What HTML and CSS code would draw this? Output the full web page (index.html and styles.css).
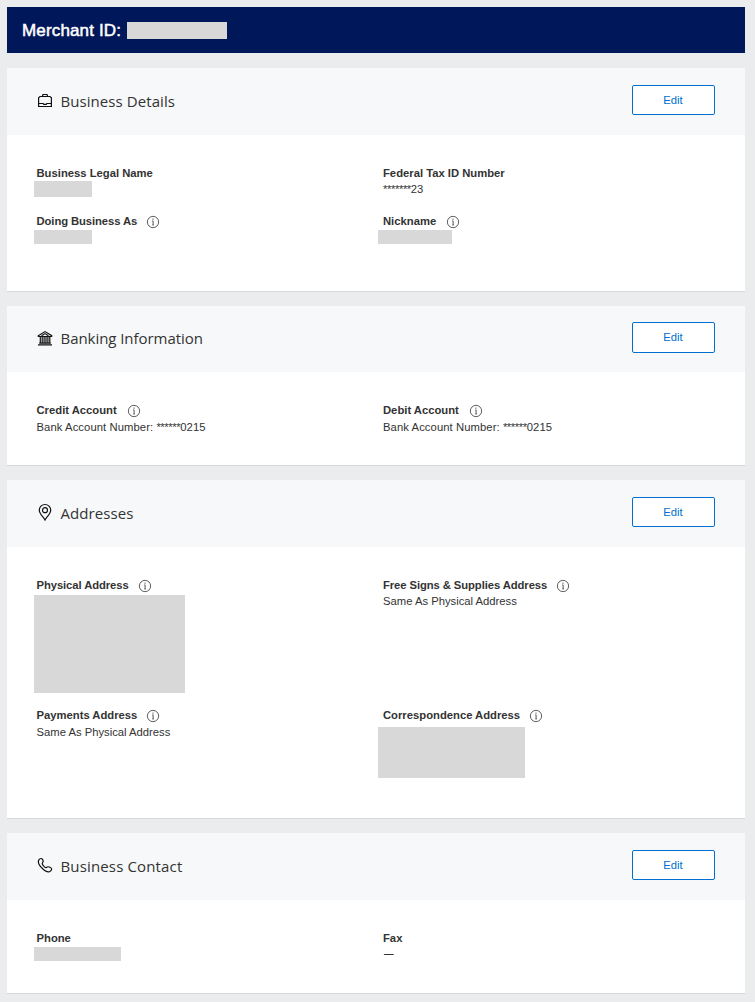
FILE: index.html
```html
<!DOCTYPE html>
<html lang="en">
<head>
<meta charset="utf-8">
<title>Merchant Profile</title>
<link rel="stylesheet" href="styles.css">
</head>
<body>
<svg class="defs" width="0" height="0">
  <symbol id="info" viewBox="0 0 14 14"><circle cx="7" cy="7" r="5.65" fill="none" stroke="#444" stroke-width=".85"/><path d="M6.3 5.9H7.1V10M6.4 10H7.8" fill="none" stroke="#444" stroke-width=".9"/><circle cx="7" cy="4.1" r=".7" fill="#444"/></symbol>
</svg>
<header class="merchant"><h1>Merchant ID:</h1><span class="redacted merchant-id"></span></header>
<main>
  <section class="card details">
    <div class="card-head">
      <svg class="icon" viewBox="0 0 16 18"><path d="M3 5.5h10l1.4 1.2v8.8H1.6V6.7zM1.6 12.5h4.6l.5.9h2.6l.5-.9h4.6M5.4 5.3l.6-1.8h4l.6 1.8"/></svg>
      <h2>Business Details</h2><button>Edit</button>
    </div>
    <div class="fields">
      <div class="field"><div class="label">Business Legal Name</div><div class="redacted name"></div></div>
      <div class="field"><div class="label">Federal Tax ID Number</div><div class="value"><span class="mask">*******</span>23</div></div>
      <div class="field"><div class="label tight">Doing Business As<svg class="info"><use href="#info"/></svg></div><div class="redacted alias"></div></div>
      <div class="field"><div class="label">Nickname<svg class="info wide"><use href="#info"/></svg></div><div class="redacted nickname"></div></div>
    </div>
  </section>
  <section class="card banking">
    <div class="card-head">
      <svg class="icon bank" viewBox="0 0 16 18"><path d="M1.3 6.7 8 2.6l6.7 4.1v.8H1.3zM4.6 6.8 8 4.6l3.4 2.2M3.3 7.5v6.6M5.2 7.5v6.6M7.1 7.5v6.6M9 7.5v6.6M10.9 7.5v6.6M12.8 7.5v6.6M2.2 14.1h11.6M1 15.8h14"/></svg>
      <h2>Banking Information</h2><button>Edit</button>
    </div>
    <div class="fields">
      <div class="field"><div class="label">Credit Account<svg class="info wide"><use href="#info"/></svg></div><div class="value lower account">Bank Account Number: <span class="mask">******</span>0215</div></div>
      <div class="field"><div class="label">Debit Account<svg class="info wide"><use href="#info"/></svg></div><div class="value lower account">Bank Account Number: <span class="mask">******</span>0215</div></div>
    </div>
  </section>
  <section class="card addresses">
    <div class="card-head">
      <svg class="icon" viewBox="0 0 16 18"><path d="M8 16.9C7 14.5 2.3 11 2.3 7.2a5.7 5.7 0 0 1 11.4 0C13.7 11 9 14.5 8 16.9z"/><circle cx="8" cy="7.2" r="2.5"/></svg>
      <h2>Addresses</h2><button>Edit</button>
    </div>
    <div class="fields">
      <div class="field"><div class="label tight">Physical Address<svg class="info"><use href="#info"/></svg></div><div class="redacted physical"></div></div>
      <div class="field"><div class="label tight">Free Signs &amp; Supplies Address<svg class="info"><use href="#info"/></svg></div><div class="value">Same As Physical Address</div></div>
      <div class="field"><div class="label">Payments Address<svg class="info"><use href="#info"/></svg></div><div class="value lower">Same As Physical Address</div></div>
      <div class="field"><div class="label">Correspondence Address<svg class="info"><use href="#info"/></svg></div><div class="redacted correspondence"></div></div>
    </div>
  </section>
  <section class="card contact">
    <div class="card-head">
      <svg class="icon" viewBox="0 0 16 18"><path d="M2 3.6C3 2.3 4.7 2.1 5.5 3.4c1 1.5.9 2.4 0 3.4-.7.8-.2 1.6.8 2.8 1.1 1.3 2.2 2.4 3 2 .9-1 1.9-1.2 3.6-.4 2 .9 2.2 2.3.8 3.7-1.6 1.6-4.2 1.2-6.7-.9C2.9 10.6.2 6.5 2 3.6z"/></svg>
      <h2>Business Contact</h2><button>Edit</button>
    </div>
    <div class="fields">
      <div class="field"><div class="label">Phone</div><div class="redacted phone"></div></div>
      <div class="field"><div class="label">Fax</div><div class="value none">—</div></div>
    </div>
  </section>
</main>
</body>
</html>
```
FILE: styles.css
```css
* { box-sizing: border-box; }
body {
  margin: 0;
  padding: 7px 10px 8px 7px;
  background: #ebecee;
  color: #333;
  font: 11.25px/16px "Liberation Sans", Arial, sans-serif;
}
.defs { display: block; }
h1, h2 { margin: 0; }
.merchant {
  display: flex;
  align-items: center;
  height: 46px;
  padding-left: 15px;
  background: #00175a;
}
h1 {
  width: 105px;
  margin-top: 2px;
  color: #fff;
  font-size: 17px;
  line-height: 20px;
  font-weight: 400;
  letter-spacing: .15px;
  white-space: nowrap;
  -webkit-text-stroke: .5px #fff;
}
.redacted { background: #d8d8d8; }
.merchant-id { width: 100px; height: 17px; margin-top: 1px; }
main { display: flex; flex-direction: column; gap: 14px; padding-top: 15px; }
.card { background: #fff; border-bottom: 1px solid #d5d9dc; }
.details { height: 224px; }
.banking { height: 160px; }
.addresses { height: 339px; }
.contact { height: 161px; }
.card-head {
  display: flex;
  align-items: center;
  height: 67px;
  padding: 0 30px;
  background: #f7f8f9;
}
.banking .card-head { height: 66px; }
.icon {
  width: 16px;
  height: 18px;
  margin: -3px 7.5px 0 0;
  fill: none;
  stroke: #111;
  stroke-width: 1.2;
}
h2 {
  margin-top: -2px;
  font: 400 15px/20px "Open Sans", sans-serif;
  letter-spacing: .07px;
}
.banking h2 { letter-spacing: -.05px; }
.contact h2 { letter-spacing: .15px; }
button {
  width: 83px;
  height: 30px;
  margin: -3px 0 0 auto;
  padding: 0 1px 0 0;
  border: 1px solid #006fcf;
  border-radius: 2px;
  background: #fff;
  color: #006fcf;
  font: 11.25px/16px "Liberation Sans", Arial, sans-serif;
}
.banking button { height: 31px; padding-bottom: 1px; }
.fields {
  display: grid;
  grid-template-columns: 346.5px 1fr;
  grid-template-rows: 48px;
  padding: 30px 29.5px 0;
}
.addresses .fields { grid-template-rows: 130px; }
.label {
  display: flex;
  align-items: center;
  height: 16px;
  font-weight: 700;
  white-space: nowrap;
}
.tight { letter-spacing: -.08px; }
.info { width: 14px; height: 14px; margin: 2px 0 0 9px; }
.wide { margin-left: 10px; }
.account { letter-spacing: .08px; }
.mask { letter-spacing: -.4px; }
.none { padding-left: 1px; font-size: 9.5px; font-weight: 700; }
.lower { margin-top: 1px; }
.field .redacted { margin-left: -2.5px; }
.field .name { width: 58px; height: 16px; }
.field .alias { width: 58px; height: 14px; margin-top: 1px; }
.field .nickname { width: 74px; height: 14px; margin: 1px 0 0 -5px; }
.field .physical { width: 151px; height: 98px; margin-top: 2px; }
.field .correspondence { width: 147px; height: 51px; margin: 4px 0 0 -5px; }
.field .phone { width: 87px; height: 14px; margin-top: 1px; }
```
